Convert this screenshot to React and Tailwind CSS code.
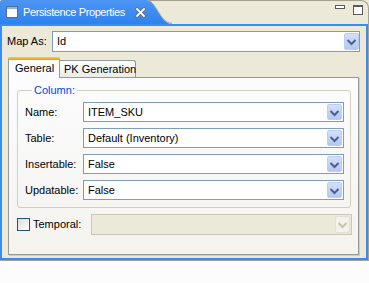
import React from "react";

function Chevron({ color }) {
  return (
    <svg width="13" height="15" viewBox="0 0 13 15" className="block">
      <path d="M2.5 6 L6.5 10 L10.5 6" fill="none" stroke={color} strokeWidth="2" strokeLinejoin="miter" />
    </svg>
  );
}

function DropBtn({ disabled }) {
  if (disabled) {
    return (
      <div className="w-[15px] h-full shrink-0 rounded-[2px] border border-[#E2E0D6] bg-[#F2F1EC] flex items-center justify-center">
        <Chevron color="#C5C3B8" />
      </div>
    );
  }
  return (
    <div className="w-[15px] h-full shrink-0 rounded-[2px] border border-[#BCCDF5] bg-linear-to-b from-[#D2DFFD] to-[#B3C7F6] flex items-center justify-center">
      <Chevron color="#4D6185" />
    </div>
  );
}

function Combo({ value, h21, disabled }) {
  return (
    <div
      className={
        disabled
          ? "flex items-stretch h-[21px] border border-[#C9C7BA] bg-[#ECE9D8] pt-px pb-px pr-px"
          : h21
          ? "flex items-stretch h-[21px] border border-[#7F9DB9] bg-white pt-px pb-px pr-0"
          : "flex items-stretch h-[20px] border border-[#7F9DB9] bg-white pt-px pb-px pr-px"
      }
    >
      <div className="flex-1 flex items-center pl-[4px] leading-none whitespace-nowrap">{value}</div>
      <DropBtn disabled={disabled} />
    </div>
  );
}

export default function App() {
  return (
    <div className="w-[369px] h-[283px] bg-[#FCFCFC] text-[11px] text-black font-['Liberation_Sans',Arial,sans-serif] overflow-hidden whitespace-nowrap">
      <div className="flex flex-col w-[369px]">
        {/* title row */}
        <div className="flex h-[24px] bg-[#ECE9D8]">
          <div className="w-[146px] shrink-0 h-full bg-linear-to-b from-[#4C95F4] to-[#2E82EE] rounded-tl-[2px] flex items-center pl-[6px]">
            <svg width="12" height="12" viewBox="0 0 12 12" className="block shrink-0">
              <rect x="0.5" y="0.5" width="11" height="11" fill="#F4F6FA" stroke="#5B6C86" />
              <rect x="1" y="1" width="10" height="2" fill="#8FB3E8" />
              <rect x="1" y="3" width="10" height="8" fill="#FFFFFF" />
            </svg>
            <span className="text-white leading-none ml-[5px] whitespace-nowrap tracking-[-0.4px]">Persistence Properties</span>
            <svg width="11" height="11" viewBox="0 0 11 11" className="block shrink-0 ml-[10px]">
              <path d="M2 2 L9 9 M9 2 L2 9" stroke="#5E6B7E" strokeWidth="3.6" strokeLinecap="square" />
              <path d="M2 2 L9 9 M9 2 L2 9" stroke="#FFFFFF" strokeWidth="1.8" strokeLinecap="square" />
            </svg>
          </div>
          <svg width="26" height="24" viewBox="0 0 26 24" className="block shrink-0">
            <defs>
              <linearGradient id="tg" x1="0" y1="0" x2="0" y2="1">
                <stop offset="0" stopColor="#4C95F4" />
                <stop offset="1" stopColor="#2E82EE" />
              </linearGradient>
            </defs>
            <line x1="0" y1="0.5" x2="26" y2="0.5" stroke="#A5A294" />
            <path d="M0 0 H1 C10 0 14 24 26 24 H0 Z" fill="url(#tg)" />
            <path d="M1 0.5 C10 0.5 14 23.5 26 23.5" fill="none" stroke="#A8A496" />
          </svg>
          <div className="flex-1 h-full border-t border-r border-[#A5A294] rounded-tr-[8px] flex items-start justify-end gap-[8px] pr-[5px] pt-[4px]">
            <div className="w-[10px] h-[4px] border border-[#5A5A5A] bg-white" />
            <div className="w-[10px] h-[10px] border border-t-2 border-[#5A5A5A] bg-white" />
          </div>
        </div>

        {/* body */}
        <div className="h-[237px] border-r border-b border-[#A5A294]">
          <div className="h-full border-2 border-[#3B8CF1] bg-[#ECE9D8] flex flex-col pt-[5px] pl-[5px] pr-[6px] pb-[3px]">
            <div className="flex items-center">
              <span className="w-[45px] leading-none">Map As:</span>
              <div className="flex-1">
                <Combo value="Id" h21 />
              </div>
            </div>

            {/* tab folder */}
            <div className="flex flex-col flex-1 mt-[5px] ml-px mr-px">
              <div className="flex items-end h-[20px]">
                <div className="relative z-10 -mb-px h-[21px] w-[52px] bg-[#FCFCFE] border-x border-[#919B9C] rounded-t-[3px] flex flex-col">
                  <div className="h-[3px] -mx-px rounded-t-[3px] bg-linear-to-b from-[#FFC83C] to-[#E6A000]" />
                  <div className="flex-1 flex items-center pl-[6px] pb-[2px]">General</div>
                </div>
                <div className="h-[17px] w-[76px] border-t border-r border-[#919B9C] rounded-tr-[3px] bg-linear-to-b from-[#FFFFFF] to-[#ECEBE6] flex items-center pl-[4px]">
                  PK Generation
                </div>
              </div>
              <div className="flex-1 border border-[#919B9C] shadow-[1px_1px_0_#D0CEC3] bg-linear-to-b from-[#FCFCFE] to-[#F4F3EE] flex flex-col pt-[7px] pl-[8px] pr-[6px]">
                <fieldset className="border border-[#D0D0BF] rounded-[3px] pl-[7px] pr-[6px] pt-[6px] pb-[7px] mr-px">
                  <legend className="ml-[7px] px-[2px] text-[#0046D5] leading-none">Column:</legend>
                  <div className="grid grid-cols-[58px_1fr] gap-y-[6px] items-center">
                    <span>Name:</span>
                    <Combo value="ITEM_SKU" />
                    <span>Table:</span>
                    <Combo value="Default (Inventory)" />
                    <span>Insertable:</span>
                    <Combo value="False" />
                    <span>Updatable:</span>
                    <Combo value="False" />
                  </div>
                </fieldset>
                <div className="flex items-center mt-[6px]">
                  <div className="w-[13px] h-[13px] shrink-0 border border-[#1C5180] bg-linear-to-br from-[#DCDCD7] to-[#FFFFFF]" />
                  <span className="ml-[3px] w-[58px]">Temporal:</span>
                  <div className="flex-1">
                    <Combo disabled value="" />
                  </div>
                </div>
              </div>
            </div>
          </div>
        </div>
      </div>
    </div>
  );
}
